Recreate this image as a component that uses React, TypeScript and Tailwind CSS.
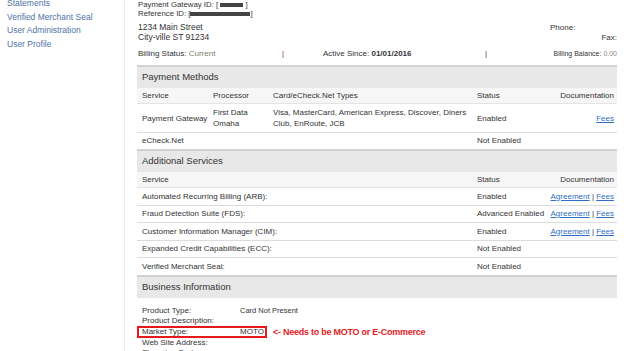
import React from "react";

const sideLinks = ["Statements", "Verified Merchant Seal", "User Administration", "User Profile"];

const services = [
  { name: "Automated Recurring Billing (ARB):", status: "Enabled", docs: true, h: "h-[18px]" },
  { name: "Fraud Detection Suite (FDS):", status: "Advanced Enabled", docs: true, h: "h-[17px]" },
  { name: "Customer Information Manager (CIM):", status: "Enabled", docs: true, h: "h-[18px]" },
  { name: "Expanded Credit Capabilities (ECC):", status: "Not Enabled", docs: false, h: "h-[17px]" },
  { name: "Verified Merchant Seal:", status: "Not Enabled", docs: false, h: "h-[17px]" },
];

function SectionHeader({ title }: { title: string }) {
  return (
    <div className="flex h-[23px] items-center border-t-2 border-[#d2d2d2] bg-[#e8e8e8] pl-[5px] text-[9.5px]">
      {title}
    </div>
  );
}

function Masked({ w }: { w: string }) {
  return <span className={`inline-block h-[4px] ${w} bg-[#444] align-middle`} />;
}

function Link({ children }: { children: React.ReactNode }) {
  return <span className="text-[#2f6fc4] underline">{children}</span>;
}

export default function App() {
  return (
    <div className="flex h-[351px] w-[628px] overflow-hidden bg-white font-['Liberation_Sans',Arial,sans-serif] text-[#333]">
      {/* Sidebar */}
      <aside className="w-[125px] shrink-0 border-r border-[#ececec] pl-[7px]">
        <ul className="-mt-[3px] text-[8.5px] leading-[13.5px] text-[#4f73a8]">
          {sideLinks.map((l) => (
            <li key={l}>{l}</li>
          ))}
        </ul>
      </aside>

      {/* Main */}
      <main className="ml-[12px] w-[480px] shrink-0">
        <div className="pl-[1px]">
          <div className="text-[7.8px] leading-[9px]">
            Payment Gateway ID: [ <Masked w="w-[23px]" /> ]
          </div>
          <div className="text-[7.8px] leading-[9px]">
            Reference ID: [<Masked w="w-[60px]" />]
          </div>

          <div className="mt-[4px] flex justify-between">
            <div className="text-[8.5px] leading-[10px]">
              1234 Main Street
              <br />
              City-ville ST 91234
            </div>
            <div className="mt-[1px] w-[67px] text-[8px] leading-[10px]">
              <div>Phone:</div>
              <div className="text-right">Fax:</div>
            </div>
          </div>

          <div className="mt-[6px] flex text-[8px] leading-[10px]">
            <div className="w-[144px]">
              Billing Status: <span className="text-[#7d7d6e]">Current</span>
            </div>
            <div className="w-[41px] text-[#9b2b2b]">|</div>
            <div className="w-[162px]">
              Active Since: <span className="font-bold">01/01/2016</span>
            </div>
            <div className="text-[#333]">|</div>
            <div className="flex-1 text-right text-[7px]">
              Billing Balance: <span className="text-[#8a8a7a]">0.00</span>
            </div>
          </div>
        </div>

        {/* Payment Methods */}
        <section className="mt-[6px] text-[8px]">
          <SectionHeader title="Payment Methods" />
          <div className="grid h-[16px] grid-cols-[71px_60px_204px_1fr_auto] items-center border-b border-[#e4e4e4] bg-[#f6f6f6] pr-[3px] pl-[5px]">
            <span>Service</span>
            <span>Processor</span>
            <span>Card/eCheck.Net Types</span>
            <span>Status</span>
            <span className="text-right">Documentation</span>
          </div>
          <div className="grid h-[29px] grid-cols-[71px_60px_204px_1fr_auto] items-center border-b border-[#dcdcdc] pr-[3px] pl-[5px] leading-[11px]">
            <span>Payment Gateway</span>
            <span>
              First Data
              <br />
              Omaha
            </span>
            <span>
              Visa, MasterCard, American Express, Discover, Diners
              <br />
              Club, EnRoute, JCB
            </span>
            <span>Enabled</span>
            <span className="text-right">
              <Link>Fees</Link>
            </span>
          </div>
          <div className="grid h-[16px] grid-cols-[71px_60px_204px_1fr_auto] items-center pr-[3px] pl-[5px]">
            <span>eCheck.Net</span>
            <span />
            <span />
            <span>Not Enabled</span>
            <span />
          </div>

          {/* Additional Services */}
          <SectionHeader title="Additional Services" />
          <div className="grid h-[16px] grid-cols-[335px_1fr_auto] items-center border-b border-[#e4e4e4] bg-[#f6f6f6] pr-[3px] pl-[5px]">
            <span>Service</span>
            <span>Status</span>
            <span className="text-right">Documentation</span>
          </div>
          {services.map((s, i) => (
            <div
              key={s.name}
              className={`grid ${s.h} grid-cols-[335px_1fr_auto] items-center pr-[3px] pl-[5px] ${
                i < services.length - 1 ? "border-b border-[#dcdcdc]" : ""
              }`}
            >
              <span>{s.name}</span>
              <span className="whitespace-nowrap">{s.status}</span>
              <span className="whitespace-nowrap text-right">
                {s.docs && (
                  <>
                    <Link>Agreement</Link> | <Link>Fees</Link>
                  </>
                )}
              </span>
            </div>
          ))}

          {/* Business Information */}
          <SectionHeader title="Business Information" />
          <div className="pt-[8px] leading-[10px]">
            <div className="flex pl-[5px]">
              <span className="w-[98px]">Product Type:</span>
              <span className="text-[7.5px]">Card Not Present</span>
            </div>
            <div className="pl-[5px]">Product Description:</div>
            <div className="flex items-center">
              <div className="flex h-[12px] w-[130px] items-center border-2 border-[#e31b1b] pl-[3px] leading-[8px]">
                <span className="w-[98px]">Market Type:</span>
                <span>MOTO</span>
              </div>
              <span className="ml-[6px] text-[9px] font-bold tracking-[-0.25px] text-[#e4231f]">
                &lt;- Needs to be MOTO or E-Commerce
              </span>
            </div>
            <div className="pl-[5px]">Web Site Address:</div>
            <div className="pl-[5px]">Shopping Cart:</div>
          </div>
        </section>
      </main>
    </div>
  );
}
